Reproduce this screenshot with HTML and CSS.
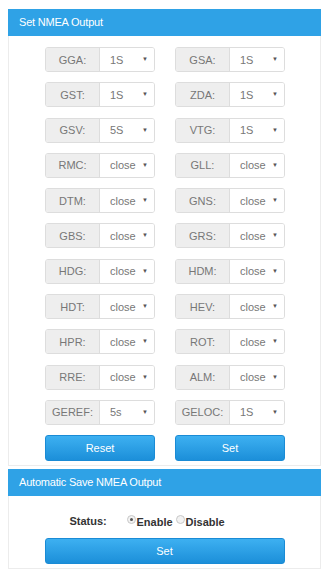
FILE: index.html
```html
<!DOCTYPE html>
<html>
<head>
<meta charset="utf-8">
<link rel="stylesheet" href="styles.css">
</head>
<body>
<div class="panel panel-first">
  <div class="panel-head">Set NMEA Output</div>
  <div class="panel-body">
    <div class="row">
      <div class="group"><span class="lbl">GGA:</span><span class="sel">1S<i class="arr">▼</i></span></div>
      <div class="group"><span class="lbl">GSA:</span><span class="sel">1S<i class="arr">▼</i></span></div>
    </div>
    <div class="row">
      <div class="group"><span class="lbl">GST:</span><span class="sel">1S<i class="arr">▼</i></span></div>
      <div class="group"><span class="lbl">ZDA:</span><span class="sel">1S<i class="arr">▼</i></span></div>
    </div>
    <div class="row">
      <div class="group"><span class="lbl">GSV:</span><span class="sel">5S<i class="arr">▼</i></span></div>
      <div class="group"><span class="lbl">VTG:</span><span class="sel">1S<i class="arr">▼</i></span></div>
    </div>
    <div class="row">
      <div class="group"><span class="lbl">RMC:</span><span class="sel">close<i class="arr">▼</i></span></div>
      <div class="group"><span class="lbl">GLL:</span><span class="sel">close<i class="arr">▼</i></span></div>
    </div>
    <div class="row">
      <div class="group"><span class="lbl">DTM:</span><span class="sel">close<i class="arr">▼</i></span></div>
      <div class="group"><span class="lbl">GNS:</span><span class="sel">close<i class="arr">▼</i></span></div>
    </div>
    <div class="row">
      <div class="group"><span class="lbl">GBS:</span><span class="sel">close<i class="arr">▼</i></span></div>
      <div class="group"><span class="lbl">GRS:</span><span class="sel">close<i class="arr">▼</i></span></div>
    </div>
    <div class="row">
      <div class="group"><span class="lbl">HDG:</span><span class="sel">close<i class="arr">▼</i></span></div>
      <div class="group"><span class="lbl">HDM:</span><span class="sel">close<i class="arr">▼</i></span></div>
    </div>
    <div class="row">
      <div class="group"><span class="lbl">HDT:</span><span class="sel">close<i class="arr">▼</i></span></div>
      <div class="group"><span class="lbl">HEV:</span><span class="sel">close<i class="arr">▼</i></span></div>
    </div>
    <div class="row">
      <div class="group"><span class="lbl">HPR:</span><span class="sel">close<i class="arr">▼</i></span></div>
      <div class="group"><span class="lbl">ROT:</span><span class="sel">close<i class="arr">▼</i></span></div>
    </div>
    <div class="row">
      <div class="group"><span class="lbl">RRE:</span><span class="sel">close<i class="arr">▼</i></span></div>
      <div class="group"><span class="lbl">ALM:</span><span class="sel">close<i class="arr">▼</i></span></div>
    </div>
    <div class="row">
      <div class="group"><span class="lbl">GEREF:</span><span class="sel">5s<i class="arr">▼</i></span></div>
      <div class="group"><span class="lbl">GELOC:</span><span class="sel">1S<i class="arr">▼</i></span></div>
    </div>
    <div class="row row-btn">
      <div class="btn">Reset</div>
      <div class="btn">Set</div>
    </div>
  </div>
</div>
<div class="panel panel-second">
  <div class="panel-head">Automatic Save NMEA Output</div>
  <div class="panel-body2">
    <div class="status">
      <span class="status-lbl">Status:</span>
      <span class="radio checked"></span><span class="rtext">Enable</span>
      <span class="radio"></span><span class="rtext">Disable</span>
    </div>
    <div class="btn btn-wide">Set</div>
  </div>
</div>
</body>
</html>
```
FILE: styles.css
```css
html, body {
  margin: 0;
  padding: 0;
  background: #ffffff;
}
body {
  padding: 9px 0 0 8px;
  font-family: "Liberation Sans", Arial, sans-serif;
}
.panel {
  width: 313px;
  box-sizing: border-box;
  border: 1px solid #ececec;
  border-top: none;
  background: #fff;
}
.panel-second {
  margin-top: 3px;
}
.panel-head {
  height: 27px;
  margin: 0 -1px;
  background: #2fa2e6;
  color: #fff;
  font-size: 11px;
  line-height: 27px;
  padding-left: 11px;
  letter-spacing: -0.2px;
}
.panel-body {
  padding: 11px 0 4px;
  display: flex;
  flex-direction: column;
  gap: 10.3px;
}
.row {
  display: flex;
  justify-content: center;
  gap: 20px;
  padding-left: 1px;
}
.group {
  display: flex;
  width: 110px;
  height: 25px;
  box-sizing: border-box;
  border: 1px solid #dddddd;
  border-radius: 3px;
  overflow: hidden;
  font-size: 11px;
  color: #777;
}
.lbl {
  width: 53px;
  background: #eeeeee;
  border-right: 1px solid #dddddd;
  display: flex;
  align-items: center;
  justify-content: center;
}
.sel {
  flex: 1;
  position: relative;
  background: #fff;
  display: flex;
  align-items: center;
  padding-left: 10px;
  color: #777;
}
.arr {
  position: absolute;
  right: 6px;
  top: 8px;
  font-style: normal;
  font-size: 6px;
  color: #555;
}
.btn {
  width: 110px;
  height: 26px;
  box-sizing: border-box;
  border-radius: 3px;
  background: linear-gradient(#3db0f1, #1c8fd9);
  border: 1px solid #1a8bd5;
  color: #fff;
  font-size: 11px;
  display: flex;
  align-items: center;
  justify-content: center;
}
.panel-body2 {
  padding: 17px 0 4px;
  display: flex;
  flex-direction: column;
  align-items: center;
}
.status {
  display: flex;
  align-items: center;
  font-size: 11px;
  color: #333;
  width: 240px;
  padding-left: 25px;
  box-sizing: border-box;
  height: 15px;
}
.status-lbl {
  font-weight: bold;
  width: 57px;
}
.radio {
  width: 7px;
  height: 7px;
  border: 1px solid #c8c8c8;
  border-radius: 50%;
  background: #f2f2f2;
  margin-right: 1px;
  position: relative;
  top: -1px;
}
.radio.checked::after {
  content: "";
  position: absolute;
  left: 2px;
  top: 2px;
  width: 3px;
  height: 3px;
  border-radius: 50%;
  background: #555;
}
.rtext {
  font-weight: bold;
  color: #333;
  margin-right: 3px;
  position: relative;
  top: 1px;
}
.btn-wide {
  width: 240px;
  margin-top: 10px;
}
```
